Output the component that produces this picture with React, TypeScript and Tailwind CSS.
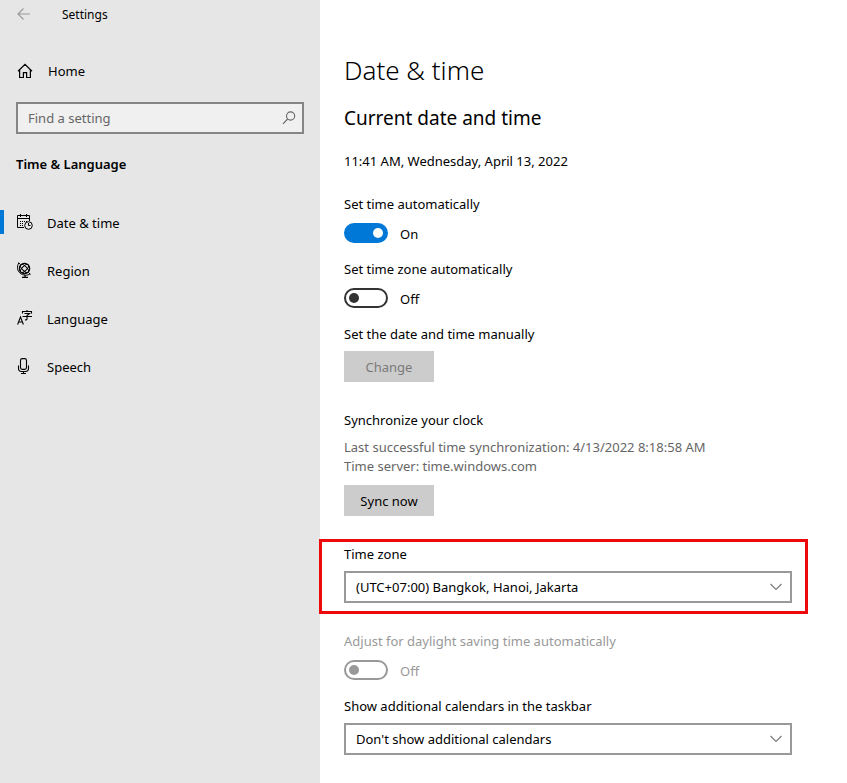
import { useState } from 'react';

const navItems = [
  { name: 'Date & time', icon: <CalendarIcon />, active: true },
  { name: 'Region', icon: <GlobeIcon />, active: false },
  { name: 'Language', icon: <LanguageIcon />, active: false },
  { name: 'Speech', icon: <MicIcon />, active: false },
];

function BackIcon() {
  return (
    <svg width="14" height="14" viewBox="0 0 14 14" fill="none" stroke="#999999" strokeWidth="1.1">
      <path d="M13 7H1.2M6.5 1.5L1 7l5.5 5.5" />
    </svg>
  );
}

function HomeIcon() {
  return (
    <svg width="16" height="16" viewBox="0 0 16 16" fill="none" stroke="#000" strokeWidth="1.2">
      <path d="M1 8.2L8 1.4l7 6.8M2.6 7v7.5h3.8V9.6h3.2v4.9h3.8V7" />
    </svg>
  );
}

function SearchIcon() {
  return (
    <svg width="14" height="14" viewBox="0 0 14 14" fill="none" stroke="#666666" strokeWidth="1.1">
      <circle cx="8.6" cy="5" r="4.1" />
      <path d="M5.6 8L1 12.8" />
    </svg>
  );
}

function CalendarIcon() {
  return (
    <svg width="16" height="16" viewBox="0 0 16 16" fill="none" stroke="#000" strokeWidth="1">
      <path d="M7 13.5H.5v-12h12v5.5M.5 4.5h12M3.5 0v3M9.5 0v3" />
      <path d="M3 7.5h8M3 9.5h4M3 11.5h4" strokeDasharray="1 1" />
      <circle cx="11.5" cy="11.5" r="3.8" />
      <path d="M11.5 9v2.5h2" />
    </svg>
  );
}

function GlobeIcon() {
  return (
    <svg width="16" height="16" viewBox="0 0 16 16" fill="none" stroke="#000" strokeWidth="1">
      <circle cx="7.5" cy="6.5" r="5.2" strokeWidth="1.2" />
      <ellipse cx="7.500" cy="6.500" rx="5.200" ry="2.200" transform="rotate(45 7.500 6.500)" />
      <ellipse cx="7.500" cy="6.500" rx="5.200" ry="2.200" transform="rotate(-45 7.500 6.500)" />
      <path d="M1.500 .500l1.800 2M11.500 10.500l2 2M1.800 1C-.5 4.500.300 9 3.200 11.300s7.300 2.500 10 .500" />
      <path d="M8 13v2M5 15.400h6" strokeWidth="1.200" />
    </svg>
  );
}

function LanguageIcon() {
  return (
    <svg width="16" height="16" viewBox="0 0 16 16" fill="none" stroke="#000" strokeWidth="1.1">
      <path d="M.6 14.500L3.500 7l2.900 7.500M1.600 12h3.800" />
      <path d="M10 0v1.500M5.500 3.500v-2h9v2M7.500 3.500h5l-2.500 2v3.500c0 .8-.5 1-2 .9M5.500 6.500h9.500" />
    </svg>
  );
}

function MicIcon() {
  return (
    <svg width="16" height="16" viewBox="0 0 16 16" fill="none" stroke="#000" strokeWidth="1.1">
      <rect x="3.5" y=".6" width="6" height="10.8" rx="1.8" />
      <path d="M1.5 7.5v2.800c0 2 1.200 3.200 3 3.200h4c1.800 0 3-1.200 3-3.200V7.500M6.500 13.500v2M4 15.500h5" />
    </svg>
  );
}

type ToggleProps = {
  id: string;
  label: string;
  defaultOn?: boolean;
  disabled?: boolean;
};

function Toggle({ id, label, defaultOn = false, disabled = false }: ToggleProps) {
  const [on, setOn] = useState(defaultOn);

  return (
    <div className={disabled ? 'text-[#999999]' : 'text-black'}>
      <label htmlFor={id} className="block">{label}</label>
      <div className="mt-[9px] flex h-5 items-center gap-3">
        <input
          id={id}
          type="checkbox"
          role="switch"
          checked={on}
          disabled={disabled}
          onChange={(e) => setOn(e.target.checked)}
          className="flex h-5 w-11 appearance-none items-center rounded-full border-2 border-[#333333] px-[3px] before:h-[10px] before:w-[10px] before:rounded-full before:bg-[#333333] checked:justify-end checked:border-[#0078d7] checked:bg-[#0078d7] checked:before:bg-white disabled:border-[#999999] disabled:before:bg-[#999999]"
        />
        <span className="pt-[2px]">{on ? 'On' : 'Off'}</span>
      </div>
    </div>
  );
}

function Dropdown({ id, label, value }: { id: string; label: string; value: string }) {
  return (
    <div className="max-w-[448px]">
      <label htmlFor={id} className="block">{label}</label>
      <div className="relative mt-[7px]">
        <select id={id} className="block h-8 w-full appearance-none border-2 border-[#999999] bg-white pr-8 pl-[10px]">
          <option>{value}</option>
        </select>
        <svg
          className="pointer-events-none absolute top-3 right-[10px]"
          width="12"
          height="8"
          viewBox="0 0 12 8"
          fill="none"
          stroke="#777777"
          strokeWidth="1.1"
        >
          <path d="M.5 1L6 6.5 11.5 1" />
        </svg>
      </div>
    </div>
  );
}

function Sidebar() {
  return (
    <aside className="w-80 shrink-0 bg-[#e6e6e6]">
      <header className="flex h-[30px] items-center pl-[17px]">
        <button type="button" aria-label="Back" className="pb-[2px]">
          <BackIcon />
        </button>
        <span className="ml-[31px] text-[12px]">Settings</span>
      </header>

      <a href="#" className="mt-[17px] flex h-12 items-center gap-[15px] pl-[17px]">
        <HomeIcon />
        Home
      </a>

      <div className="mx-4 mt-[7px] flex h-8 items-center border-2 border-[#858585] bg-[#f0f0f0] pr-[6px] pl-[10px]">
        <input
          type="text"
          aria-label="Find a setting"
          placeholder="Find a setting"
          className="min-w-0 flex-1 bg-transparent outline-none placeholder:text-[#666666]"
        />
        <SearchIcon />
      </div>

      <h2 className="mt-5 pl-4 font-semibold">Time &amp; Language</h2>

      <nav className="mt-[25px]">
        {navItems.map((item) => (
          <a key={item.name} href="#" className="flex h-12 items-center">
            <span className="mr-[14px] flex items-center gap-[13px] pb-[2px]">
              <span className={item.active ? 'h-6 w-1 bg-[#0078d7]' : 'h-6 w-1'} />
              {item.icon}
            </span>
            {item.name}
          </a>
        ))}
      </nav>
    </aside>
  );
}

const App = () => {
  return (
    <div className="flex min-h-screen bg-white font-['Noto_Sans','Open_Sans',sans-serif] text-[13px] leading-5 text-black">
      <Sidebar />

      <main className="min-w-0 flex-1 px-6 pt-[52px] pb-7">
        <h1 className="text-[26px] leading-9 font-light">Date &amp; time</h1>
        <h2 className="mt-4 text-[19px] leading-7">Current date and time</h2>
        <p className="mt-[19px]">11:41 AM, Wednesday, April 13, 2022</p>

        <div className="mt-[23px] flex flex-col gap-4">
          <Toggle id="auto-time" label="Set time automatically" defaultOn />
          <Toggle id="auto-zone" label="Set time zone automatically" />
          <div>
            <p>Set the date and time manually</p>
            <button type="button" disabled className="mt-[7px] h-[31px] w-[90px] bg-[#cccccc] text-[#7a7a7a]">
              Change
            </button>
          </div>
        </div>

        <section className="mt-7">
          <h3>Synchronize your clock</h3>
          <p className="mt-2 leading-[19px] text-[#666666]">
            Last successful time synchronization: 4/13/2022 8:18:58 AM
            <br />
            Time server: time.windows.com
          </p>
          <button type="button" className="mt-[9px] h-[31px] w-[90px] bg-[#cccccc]">
            Sync now
          </button>
        </section>

        <section className="mt-[23px] -ml-[25px] max-w-[489px] border-3 border-[#ec0a0a] pt-[2px] pr-[13px] pb-2 pl-[22px]">
          <Dropdown id="time-zone" label="Time zone" value="(UTC+07:00) Bangkok, Hanoi, Jakarta" />
        </section>

        <div className="mt-[17px] flex flex-col gap-4">
          <Toggle id="daylight" label="Adjust for daylight saving time automatically" disabled />
          <Dropdown
            id="calendars"
            label="Show additional calendars in the taskbar"
            value="Don't show additional calendars"
          />
        </div>
      </main>
    </div>
  );
};

export default App;
